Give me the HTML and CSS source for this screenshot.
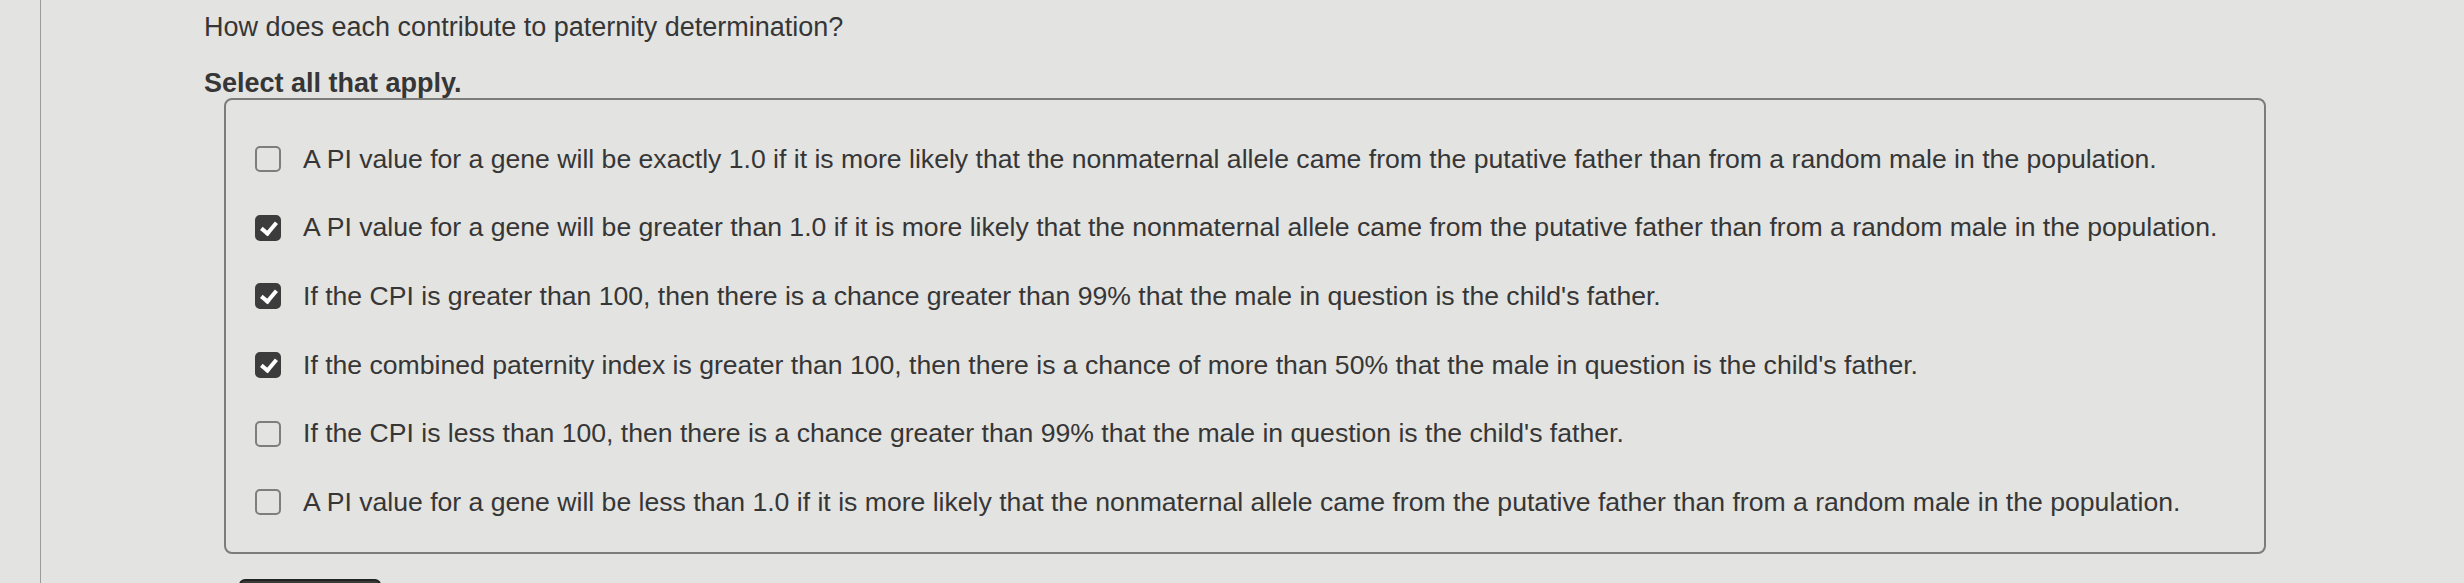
FILE: index.html
```html
<!DOCTYPE html>
<html lang="en">
<head>
    <meta charset="UTF-8">
    <meta name="viewport" content="width=device-width, initial-scale=1.0">
    <title>Question</title>
    <link rel="stylesheet" href="styles.css">
</head>
<body>

<div class="screen">
    <div class="content">
        <p class="question">How does each contribute to paternity determination?</p>
        <p class="instructions">Select all that apply.</p>

        <div class="choices">
            <label class="choice">
                <span class="box"></span>
                <span class="text">A PI value for a gene will be exactly 1.0 if it is more likely that the nonmaternal allele came from the putative father than from a random male in the population.</span>
            </label>
            <label class="choice">
                <span class="box checked"></span>
                <span class="text">A PI value for a gene will be greater than 1.0 if it is more likely that the nonmaternal allele came from the putative father than from a random male in the population.</span>
            </label>
            <label class="choice">
                <span class="box checked"></span>
                <span class="text">If the CPI is greater than 100, then there is a chance greater than 99% that the male in question is the child's father.</span>
            </label>
            <label class="choice">
                <span class="box checked"></span>
                <span class="text">If the combined paternity index is greater than 100, then there is a chance of more than 50% that the male in question is the child's father.</span>
            </label>
            <label class="choice">
                <span class="box"></span>
                <span class="text">If the CPI is less than 100, then there is a chance greater than 99% that the male in question is the child's father.</span>
            </label>
            <label class="choice">
                <span class="box"></span>
                <span class="text">A PI value for a gene will be less than 1.0 if it is more likely that the nonmaternal allele came from the putative father than from a random male in the population.</span>
            </label>
        </div>

        <div class="submit"></div>
    </div>
</div>

</body>
</html>
```

FILE: styles.css
```css
body {
    font-family: "Liberation Sans", Arial, sans-serif;
    background-color: #e3e3e1;
    color: #363636;
    margin: 0;
    padding: 0;
    height: 583px;
    overflow: hidden;
}
.screen {
    margin-left: 40px;
    border-left: 1px solid #9a9a98;
    height: 100%;
    overflow: hidden;
}
.content {
    padding-left: 163px;
    padding-top: 12px;
}
.question {
    margin: 0;
    font-size: 27px;
    line-height: 30px;
}
.instructions {
    margin: 26px 0 0 0;
    font-size: 27px;
    font-weight: bold;
    line-height: 30px;
}
.choices {
    margin: 0 0 0 20px;
    width: 2042px;
    height: 456px;
    box-sizing: border-box;
    border: 2px solid #7c7c7a;
    border-radius: 8px;
    padding: 25px 0 0 29px;
}
.choice {
    display: flex;
    align-items: center;
    height: 68.6px;
    font-size: 26.6px;
}
.box {
    flex: none;
    width: 26px;
    height: 26px;
    box-sizing: border-box;
    border: 2px solid #7e7e7c;
    border-radius: 5px;
    margin-right: 22px;
    position: relative;
}
.box.checked {
    background-color: #3c3c3c;
    border-color: #3c3c3c;
}
/* white tick drawn from two borders */
.box.checked::after {
    content: "";
    position: absolute;
    left: 7px;
    top: 2px;
    width: 6px;
    height: 12px;
    border: solid #fff;
    border-width: 0 4px 4px 0;
    transform: rotate(40deg);
}
.submit {
    margin: 25px 0 0 35px;
    width: 138px;
    height: 50px;
    background-color: #3a3a3a;
    border: 2px solid #222;
    border-radius: 6px;
}
```
